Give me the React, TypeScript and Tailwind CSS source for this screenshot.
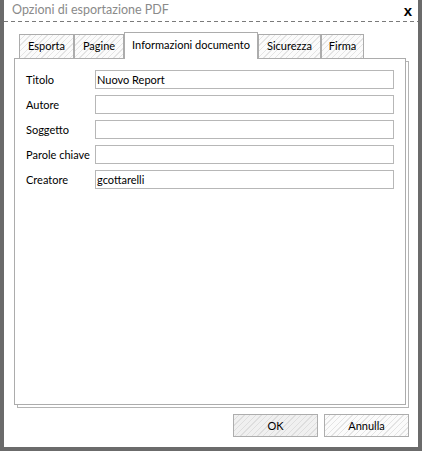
import React from 'react';

const hatch =
  'bg-[repeating-linear-gradient(135deg,#fbfbfb_0px,#fbfbfb_3px,#e4e4e4_3px,#e4e4e4_4px)]';

const tabs = [
  { label: 'Esporta', w: 'w-[55px]' },
  { label: 'Pagine', w: 'w-[50px]' },
  { label: 'Informazioni documento', w: 'w-[134px]', active: true },
  { label: 'Sicurezza', w: 'w-[63px]' },
  { label: 'Firma', w: 'w-[43px]' },
];

const fields = [
  { label: 'Titolo', value: 'Nuovo Report' },
  { label: 'Autore', value: '' },
  { label: 'Soggetto', value: '' },
  { label: 'Parole chiave', value: '' },
  { label: 'Creatore', value: 'gcottarelli' },
];

export default function App() {
  return (
    <div className="w-[422px] h-[451px] bg-[#6b6b6b] px-[4px] pb-[4px] font-['Lato',sans-serif] text-[11px] text-black">
      <div className="flex h-full flex-col bg-white">
        {/* title bar */}
        <div className="flex h-[21px] items-center justify-between pl-[8px] pr-[6px]">
          <span className="whitespace-nowrap text-[12.5px] leading-none text-[#8a8a8a]">Opzioni di esportazione PDF</span>
          <span className="font-['Liberation_Sans',sans-serif] text-[15px] font-bold leading-none">x</span>
        </div>
        <div className="h-px bg-[repeating-linear-gradient(90deg,#7a7a7a_0px,#7a7a7a_4px,transparent_4px,transparent_7px)]" />

        {/* tabs */}
        <div className="flex items-end pl-[15px] pt-[10px]">
          {tabs.map((t) =>
            t.active ? (
              <div
                key={t.label}
                className={`${t.w} relative z-10 -mb-px flex h-[27px] items-center justify-center whitespace-nowrap border border-b-0 border-[#acacac] bg-white pb-px`}
              >
                {t.label}
              </div>
            ) : (
              <div
                key={t.label}
                className={`${t.w} flex h-[24px] items-center justify-center whitespace-nowrap border border-b-0 border-[#acacac] ${hatch}`}
              >
                {t.label}
              </div>
            )
          )}
        </div>

        {/* panel */}
        <div className="ml-[10px] mr-[12px] flex-1 border border-[#acacac] bg-white px-[11px] pt-[11px] shadow-[3px_3px_0_-1px_#fff,3px_3px_0_0_#b4b4b4]">
          <div className="flex flex-col gap-[6px]">
            {fields.map((f) => (
              <div key={f.label} className="flex h-[19px] items-center">
                <span className="w-[69px] shrink-0 whitespace-nowrap leading-none">{f.label}</span>
                <div className="flex h-[19px] flex-1 items-center border border-[#b7b7b7] pl-[1px] leading-none">
                  {f.value}
                </div>
              </div>
            ))}
          </div>
        </div>

        {/* buttons */}
        <div className="flex justify-end gap-[6px] pb-[10px] pr-[9px] pt-[9px]">
          <button className="flex h-[23px] w-[85px] items-center justify-center border border-[#adadad] bg-[repeating-linear-gradient(135deg,#f0f0f0_0px,#f0f0f0_3px,#dedede_3px,#dedede_4px)] leading-none">
            OK
          </button>
          <button className={`flex h-[23px] w-[85px] items-center justify-center border border-[#adadad] ${hatch} leading-none`}>
            Annulla
          </button>
        </div>
      </div>
    </div>
  );
}
